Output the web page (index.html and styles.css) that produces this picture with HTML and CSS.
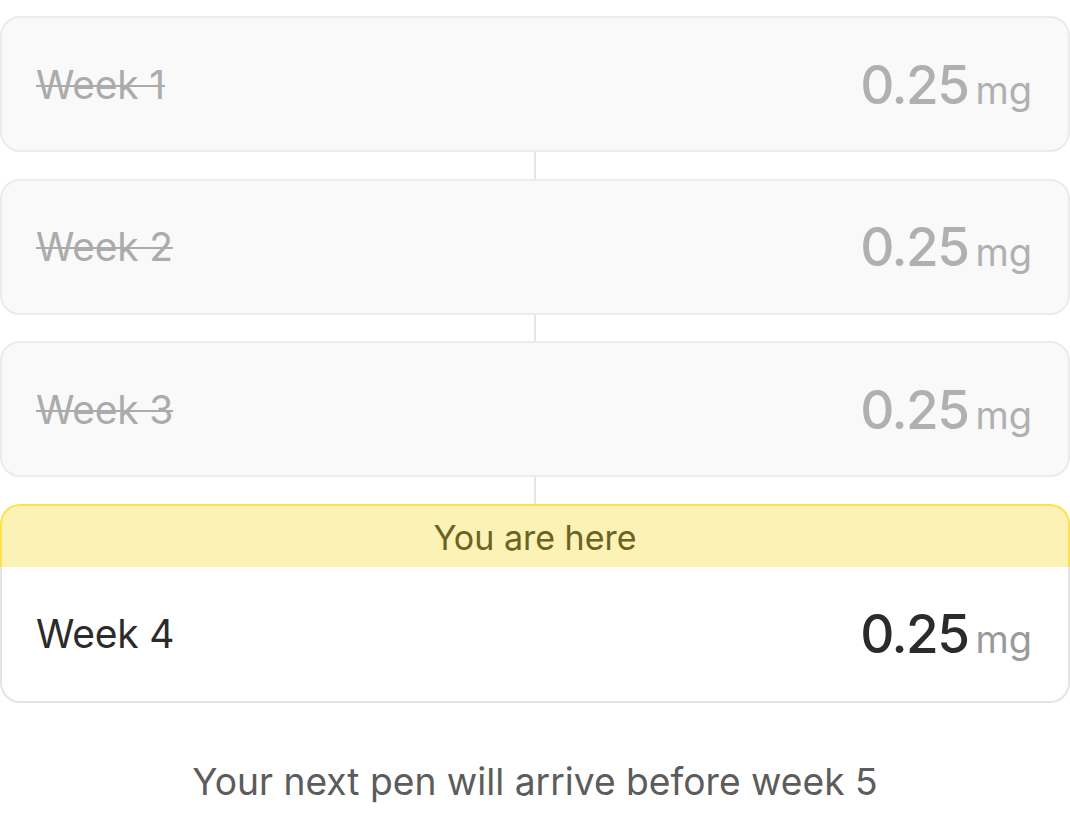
FILE: index.html
```html
<!DOCTYPE html>
<html>
<head>
<meta charset="utf-8">
<link rel="stylesheet" href="styles.css">
</head>
<body>
<div class="schedule">
  <div class="card done">
    <span class="week">Week 1</span>
    <span class="dose"><span class="num">0.25</span><span class="unit">mg</span></span>
  </div>
  <div class="connector"></div>
  <div class="card done">
    <span class="week">Week 2</span>
    <span class="dose"><span class="num">0.25</span><span class="unit">mg</span></span>
  </div>
  <div class="connector"></div>
  <div class="card done">
    <span class="week">Week 3</span>
    <span class="dose"><span class="num">0.25</span><span class="unit">mg</span></span>
  </div>
  <div class="connector"></div>
  <div class="current">
    <div class="current-head">You are here</div>
    <div class="card active">
      <span class="week">Week 4</span>
      <span class="dose"><span class="num">0.25</span><span class="unit">mg</span></span>
    </div>
  </div>
</div>
<p class="footer">Your next pen will arrive before week 5</p>
</body>
</html>
```
FILE: styles.css
```css
html, body {
  margin: 0;
  padding: 0;
  background: #ffffff;
}
body {
  font-family: Inter, "Noto Sans", sans-serif;
  padding-top: 16px;
}
.schedule {
  display: flex;
  flex-direction: column;
  align-items: stretch;
}
.card {
  box-sizing: border-box;
  height: 136px;
  border: 2px solid #ebebeb;
  border-radius: 20px;
  background: #f9f9f9;
  display: flex;
  align-items: center;
  justify-content: space-between;
  padding: 0 36px 0 34px;
}
.connector {
  width: 2px;
  height: 26.67px;
  background: #e6e6e6;
  align-self: center;
}
.week {
  font-size: 39px;
  letter-spacing: -0.2px;
  line-height: 1;
}
.done .week {
  color: #ababab;
  text-decoration: line-through;
  text-decoration-thickness: 2px;
}
.dose {
  display: flex;
  align-items: baseline;
  gap: 7px;
  margin-top: 2px;
}
.num {
  font-size: 53px;
  font-weight: 500;
  letter-spacing: -1.5px;
  line-height: 1;
}
.unit {
  font-size: 38px;
  line-height: 1;
}
.done .num, .done .unit {
  color: #b0b0b0;
}
.current {
  display: flex;
  flex-direction: column;
}
.current-head {
  box-sizing: border-box;
  height: 63px;
  background: #fdf2b6;
  border: 2px solid #fde249;
  border-bottom: none;
  border-radius: 20px 20px 0 0;
  color: #6a6322;
  font-size: 34px;
  display: flex;
  align-items: center;
  justify-content: center;
  padding-top: 2px;
}
.card.active {
  background: #ffffff;
  border-color: #e4e4e4;
  border-top: none;
  border-radius: 0 0 20px 20px;
  height: 136px;
}
.active .week {
  color: #2b2b2b;
}
.active .num {
  color: #2b2b2b;
}
.active .unit {
  color: #9a9a9a;
}
.footer {
  margin: 57px 0 0;
  text-align: center;
  font-size: 37.2px;
  line-height: 44px;
  color: #5c5c5c;
}
```
